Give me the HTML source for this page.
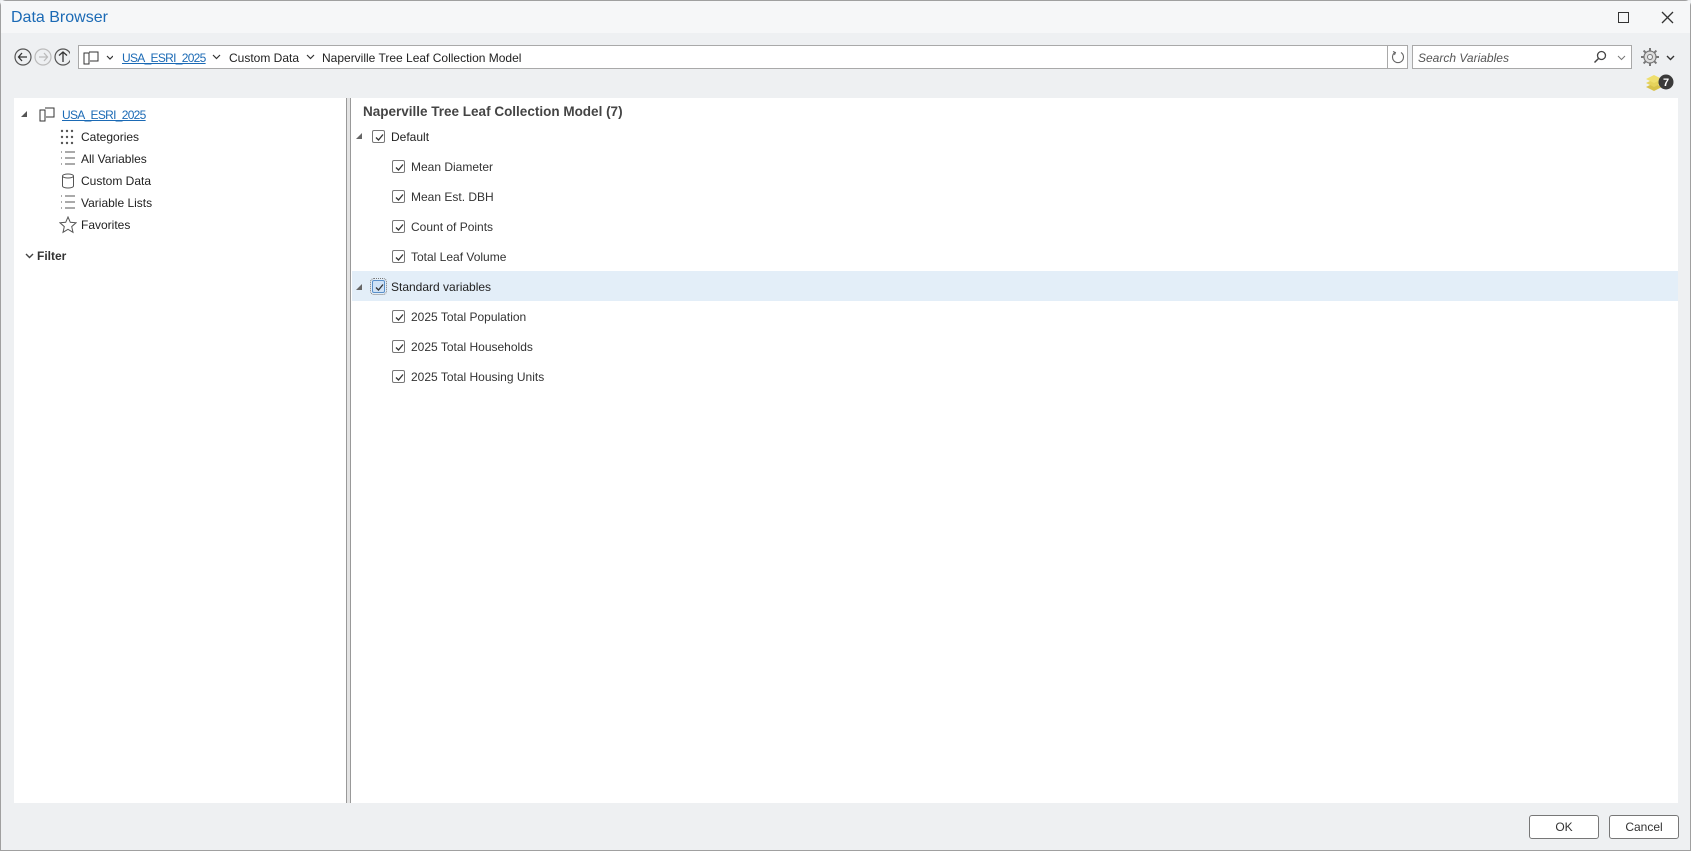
<!DOCTYPE html>
<html><head><meta charset="utf-8"><style>
*{box-sizing:border-box;margin:0;padding:0}
body{width:1691px;height:851px;background:#eef0f2;font-family:"Liberation Sans",sans-serif;font-size:12px;color:#222;position:relative;overflow:hidden}
.win{position:absolute;left:0;top:0;width:1691px;height:851px;border:1px solid #a0a0a0;border-radius:6px 6px 0 0}
.title{position:absolute;left:1px;top:1px;width:1689px;height:32px;background:#f6f7f8}
.title span{position:absolute;left:10px;top:8px;font-size:16px;color:#1b6ab5}
.abs{position:absolute}
.box{position:absolute;background:#fff;border:1px solid #a9a9a9}
.t{position:absolute;white-space:nowrap;font-size:12px;line-height:14px}
.cb{position:absolute;width:13px;height:13px;border:1px solid #777;border-radius:2px;background:#fff}
.cb svg{position:absolute;left:1px;top:1px}
.btn{position:absolute;top:815px;width:70px;height:24px;border:1px solid #777;border-radius:3px;background:#fff;text-align:center;line-height:22px;font-size:12px;color:#333}
.lnk{color:#1b6ab5;text-decoration:underline;letter-spacing:-0.7px}
</style></head><body>
<div class="win"></div>
<div class="title"><span>Data Browser</span>
<div class="abs" style="left:1617px;top:11px;width:11px;height:11px;border:1.3px solid #333"></div>
<svg class="abs" style="left:1660px;top:10px" width="13" height="13"><path d="M1 1L12 12M12 1L1 12" stroke="#333" stroke-width="1.3"/></svg>
</div>
<!-- nav -->
<svg class="abs" style="left:14px;top:47px" width="56" height="20">
<circle cx="9" cy="10" r="8" fill="none" stroke="#555" stroke-width="1.2"/><path d="M13 10H5M8 6L4.5 10L8 14" fill="none" stroke="#333" stroke-width="1.3"/>
<circle cx="29" cy="10" r="8" fill="none" stroke="#bbb" stroke-width="1.2"/><path d="M25 10H33M30 6L33.5 10L30 14" fill="none" stroke="#bbb" stroke-width="1.3"/>
<circle cx="49" cy="10" r="8" fill="none" stroke="#555" stroke-width="1.2"/><path d="M49 15V5M45 8.5L49 5L53 8.5" fill="none" stroke="#333" stroke-width="1.3"/>
</svg>
<div class="box" style="left:78px;top:45px;width:1310px;height:24px"></div>
<svg class="abs" style="left:83px;top:50px" width="30" height="16"><rect x="1" y="3" width="5" height="11" fill="none" stroke="#333"/><path d="M6 2H15V11H7" fill="none" stroke="#333"/><path d="M24 6L27 9L30 6" fill="none" stroke="#333" stroke-width="1.2"/></svg>
<div class="t lnk" style="left:122px;top:51px">USA_ESRI_2025</div>
<svg class="abs" style="left:212px;top:54px" width="10" height="6"><path d="M1 1L4.5 4.5L8 1" fill="none" stroke="#333" stroke-width="1.2"/></svg>
<div class="t" style="left:229px;top:51px">Custom Data</div>
<svg class="abs" style="left:306px;top:54px" width="10" height="6"><path d="M1 1L4.5 4.5L8 1" fill="none" stroke="#333" stroke-width="1.2"/></svg>
<div class="t" style="left:322px;top:51px">Naperville Tree Leaf Collection Model</div>
<div class="box" style="left:1387px;top:45px;width:21px;height:24px"></div>
<svg class="abs" style="left:1390px;top:49px" width="16" height="16"><path d="M11 3.5A5.5 5.5 0 1 1 5 3.5" fill="none" stroke="#666" stroke-width="1.1"/><path d="M3 2.5L5.5 3.5L4.5 6" fill="none" stroke="#666"/></svg>
<div class="box" style="left:1412px;top:45px;width:220px;height:24px"></div>
<div class="t" style="left:1418px;top:51px;font-style:italic;color:#555">Search Variables</div>
<svg class="abs" style="left:1593px;top:50px" width="14" height="14"><circle cx="8.5" cy="5.5" r="4" fill="none" stroke="#444" stroke-width="1.3"/><path d="M5.5 8.5L1.5 12.5" stroke="#444" stroke-width="1.5"/></svg>
<svg class="abs" style="left:1617px;top:55px" width="10" height="6"><path d="M1 1L4.5 4.5L8 1" fill="none" stroke="#777"/></svg>
<svg class="abs" style="left:1640px;top:47px" width="20" height="20"><g stroke="#777" stroke-width="2"><path d="M10 1V19M1 10H19M3.6 3.6L16.4 16.4M16.4 3.6L3.6 16.4"/></g><circle cx="10" cy="10" r="6" fill="#ddd" stroke="#777" stroke-width="1.2"/><circle cx="10" cy="10" r="2.5" fill="#eef0f2" stroke="#777"/></svg>
<svg class="abs" style="left:1666px;top:55px" width="10" height="6"><path d="M1 1L4.5 4.5L8 1" fill="none" stroke="#333" stroke-width="1.4"/></svg>
<svg class="abs" style="left:1645px;top:73px" width="30" height="22"><path d="M1 14L9 10L17 14L9 18Z" fill="#d8c24a"/><path d="M1 10L9 6L17 10L9 14Z" fill="#e6d35c"/><path d="M1 6L9 2L17 6L9 10Z" fill="#efdf6e"/><circle cx="21" cy="9" r="7.5" fill="#3a3a3a"/><text x="21" y="13" font-size="11" font-weight="bold" fill="#fff" text-anchor="middle" font-family="Liberation Sans">7</text></svg>
<!-- left panel -->
<div class="abs" style="left:14px;top:98px;width:333px;height:705px;background:#fff"></div>
<div class="abs" style="left:346px;top:98px;width:5px;height:705px;background:#e4e4e4;border-left:1px solid #999;border-right:1px solid #999"></div>
<div class="abs" style="left:351px;top:98px;width:1327px;height:705px;background:#fff"></div>
<svg class="abs" style="left:20px;top:110px" width="8" height="8"><path d="M7 1V7H1Z" fill="#555"/></svg>
<svg class="abs" style="left:39px;top:106px" width="16" height="16"><rect x="1" y="4" width="5" height="11" fill="none" stroke="#333"/><path d="M6 2H15V11H7" fill="none" stroke="#333"/></svg>
<div class="t lnk" style="left:62px;top:108px">USA_ESRI_2025</div>
<svg class="abs" style="left:60px;top:129px" width="14" height="16" fill="#555"><circle cx="2" cy="2" r="1.2"/><circle cx="7" cy="2" r="1.2"/><circle cx="12" cy="2" r="1.2"/><circle cx="2" cy="8" r="1.2"/><circle cx="7" cy="8" r="1.2"/><circle cx="12" cy="8" r="1.2"/><circle cx="2" cy="14" r="1.2"/><circle cx="7" cy="14" r="1.2"/><circle cx="12" cy="14" r="1.2"/></svg>
<div class="t" style="left:81px;top:130px">Categories</div>
<svg class="abs" style="left:60px;top:150px" width="16" height="16" stroke="#555"><path d="M1 2H2M1 8H2M1 14H2M5 2H15M5 8H15M5 14H15"/></svg>
<div class="t" style="left:81px;top:152px">All Variables</div>
<svg class="abs" style="left:61px;top:173px" width="14" height="16"><ellipse cx="7" cy="3" rx="5.5" ry="2" fill="none" stroke="#555"/><path d="M1.5 3V13A5.5 2 0 0 0 12.5 13V3" fill="none" stroke="#555"/></svg>
<div class="t" style="left:81px;top:174px">Custom Data</div>
<svg class="abs" style="left:60px;top:194px" width="16" height="16" stroke="#555"><path d="M1 2H2M1 8H2M1 14H2M5 2H15M5 8H15M5 14H15"/></svg>
<div class="t" style="left:81px;top:196px">Variable Lists</div>
<svg class="abs" style="left:59px;top:216px" width="18" height="18"><path d="M9 1L11.3 6.3L17 6.8L12.7 10.6L14 16.3L9 13.3L4 16.3L5.3 10.6L1 6.8L6.7 6.3Z" fill="none" stroke="#555"/></svg>
<div class="t" style="left:81px;top:218px">Favorites</div>
<svg class="abs" style="left:25px;top:253px" width="10" height="6"><path d="M1 1L4.5 4.5L8 1" fill="none" stroke="#444" stroke-width="1.4"/></svg>
<div class="t" style="left:37px;top:249px;font-weight:bold;color:#333">Filter</div>
<!-- right -->
<div class="t" style="left:363px;top:104px;font-size:13.5px;line-height:16px;font-weight:bold;color:#444">Naperville Tree Leaf Collection Model (7)</div>
<div class="abs" style="left:352px;top:271px;width:1326px;height:30px;background:#e3eef8"></div>
<svg class="abs" style="left:355px;top:132px" width="8" height="8"><path d="M7 1V7H1Z" fill="#666"/></svg>
<svg class="abs" style="left:355px;top:283px" width="8" height="8"><path d="M7 1V7H1Z" fill="#666"/></svg>
<div class="cb" style="left:372px;top:130px"><svg width="11" height="11"><path d="M2 5.5L4.5 8L9 2.5" fill="none" stroke="#333" stroke-width="1.3"/></svg></div>
<div class="t" style="left:391px;top:130px">Default</div>
<div class="cb" style="left:372px;top:280px;border-color:#5a8fc8;background:#cfe2f6;outline:1px dotted #777;outline-offset:1px"><svg width="11" height="11"><path d="M2 5.5L4.5 8L9 2.5" fill="none" stroke="#333" stroke-width="1.3"/></svg></div>
<div class="t" style="left:391px;top:280px">Standard variables</div>
<div class="cb" style="left:392px;top:160px"><svg width="11" height="11"><path d="M2 5.5L4.5 8L9 2.5" fill="none" stroke="#333" stroke-width="1.3"/></svg></div>
<div class="t" style="left:411px;top:160px;color:#333">Mean Diameter</div>
<div class="cb" style="left:392px;top:190px"><svg width="11" height="11"><path d="M2 5.5L4.5 8L9 2.5" fill="none" stroke="#333" stroke-width="1.3"/></svg></div>
<div class="t" style="left:411px;top:190px;color:#333">Mean Est. DBH</div>
<div class="cb" style="left:392px;top:220px"><svg width="11" height="11"><path d="M2 5.5L4.5 8L9 2.5" fill="none" stroke="#333" stroke-width="1.3"/></svg></div>
<div class="t" style="left:411px;top:220px;color:#333">Count of Points</div>
<div class="cb" style="left:392px;top:250px"><svg width="11" height="11"><path d="M2 5.5L4.5 8L9 2.5" fill="none" stroke="#333" stroke-width="1.3"/></svg></div>
<div class="t" style="left:411px;top:250px;color:#333">Total Leaf Volume</div>
<div class="cb" style="left:392px;top:310px"><svg width="11" height="11"><path d="M2 5.5L4.5 8L9 2.5" fill="none" stroke="#333" stroke-width="1.3"/></svg></div>
<div class="t" style="left:411px;top:310px;color:#333">2025 Total Population</div>
<div class="cb" style="left:392px;top:340px"><svg width="11" height="11"><path d="M2 5.5L4.5 8L9 2.5" fill="none" stroke="#333" stroke-width="1.3"/></svg></div>
<div class="t" style="left:411px;top:340px;color:#333">2025 Total Households</div>
<div class="cb" style="left:392px;top:370px"><svg width="11" height="11"><path d="M2 5.5L4.5 8L9 2.5" fill="none" stroke="#333" stroke-width="1.3"/></svg></div>
<div class="t" style="left:411px;top:370px;color:#333">2025 Total Housing Units</div>
<div class="btn" style="left:1529px">OK</div>
<div class="btn" style="left:1609px">Cancel</div>
</body></html>
